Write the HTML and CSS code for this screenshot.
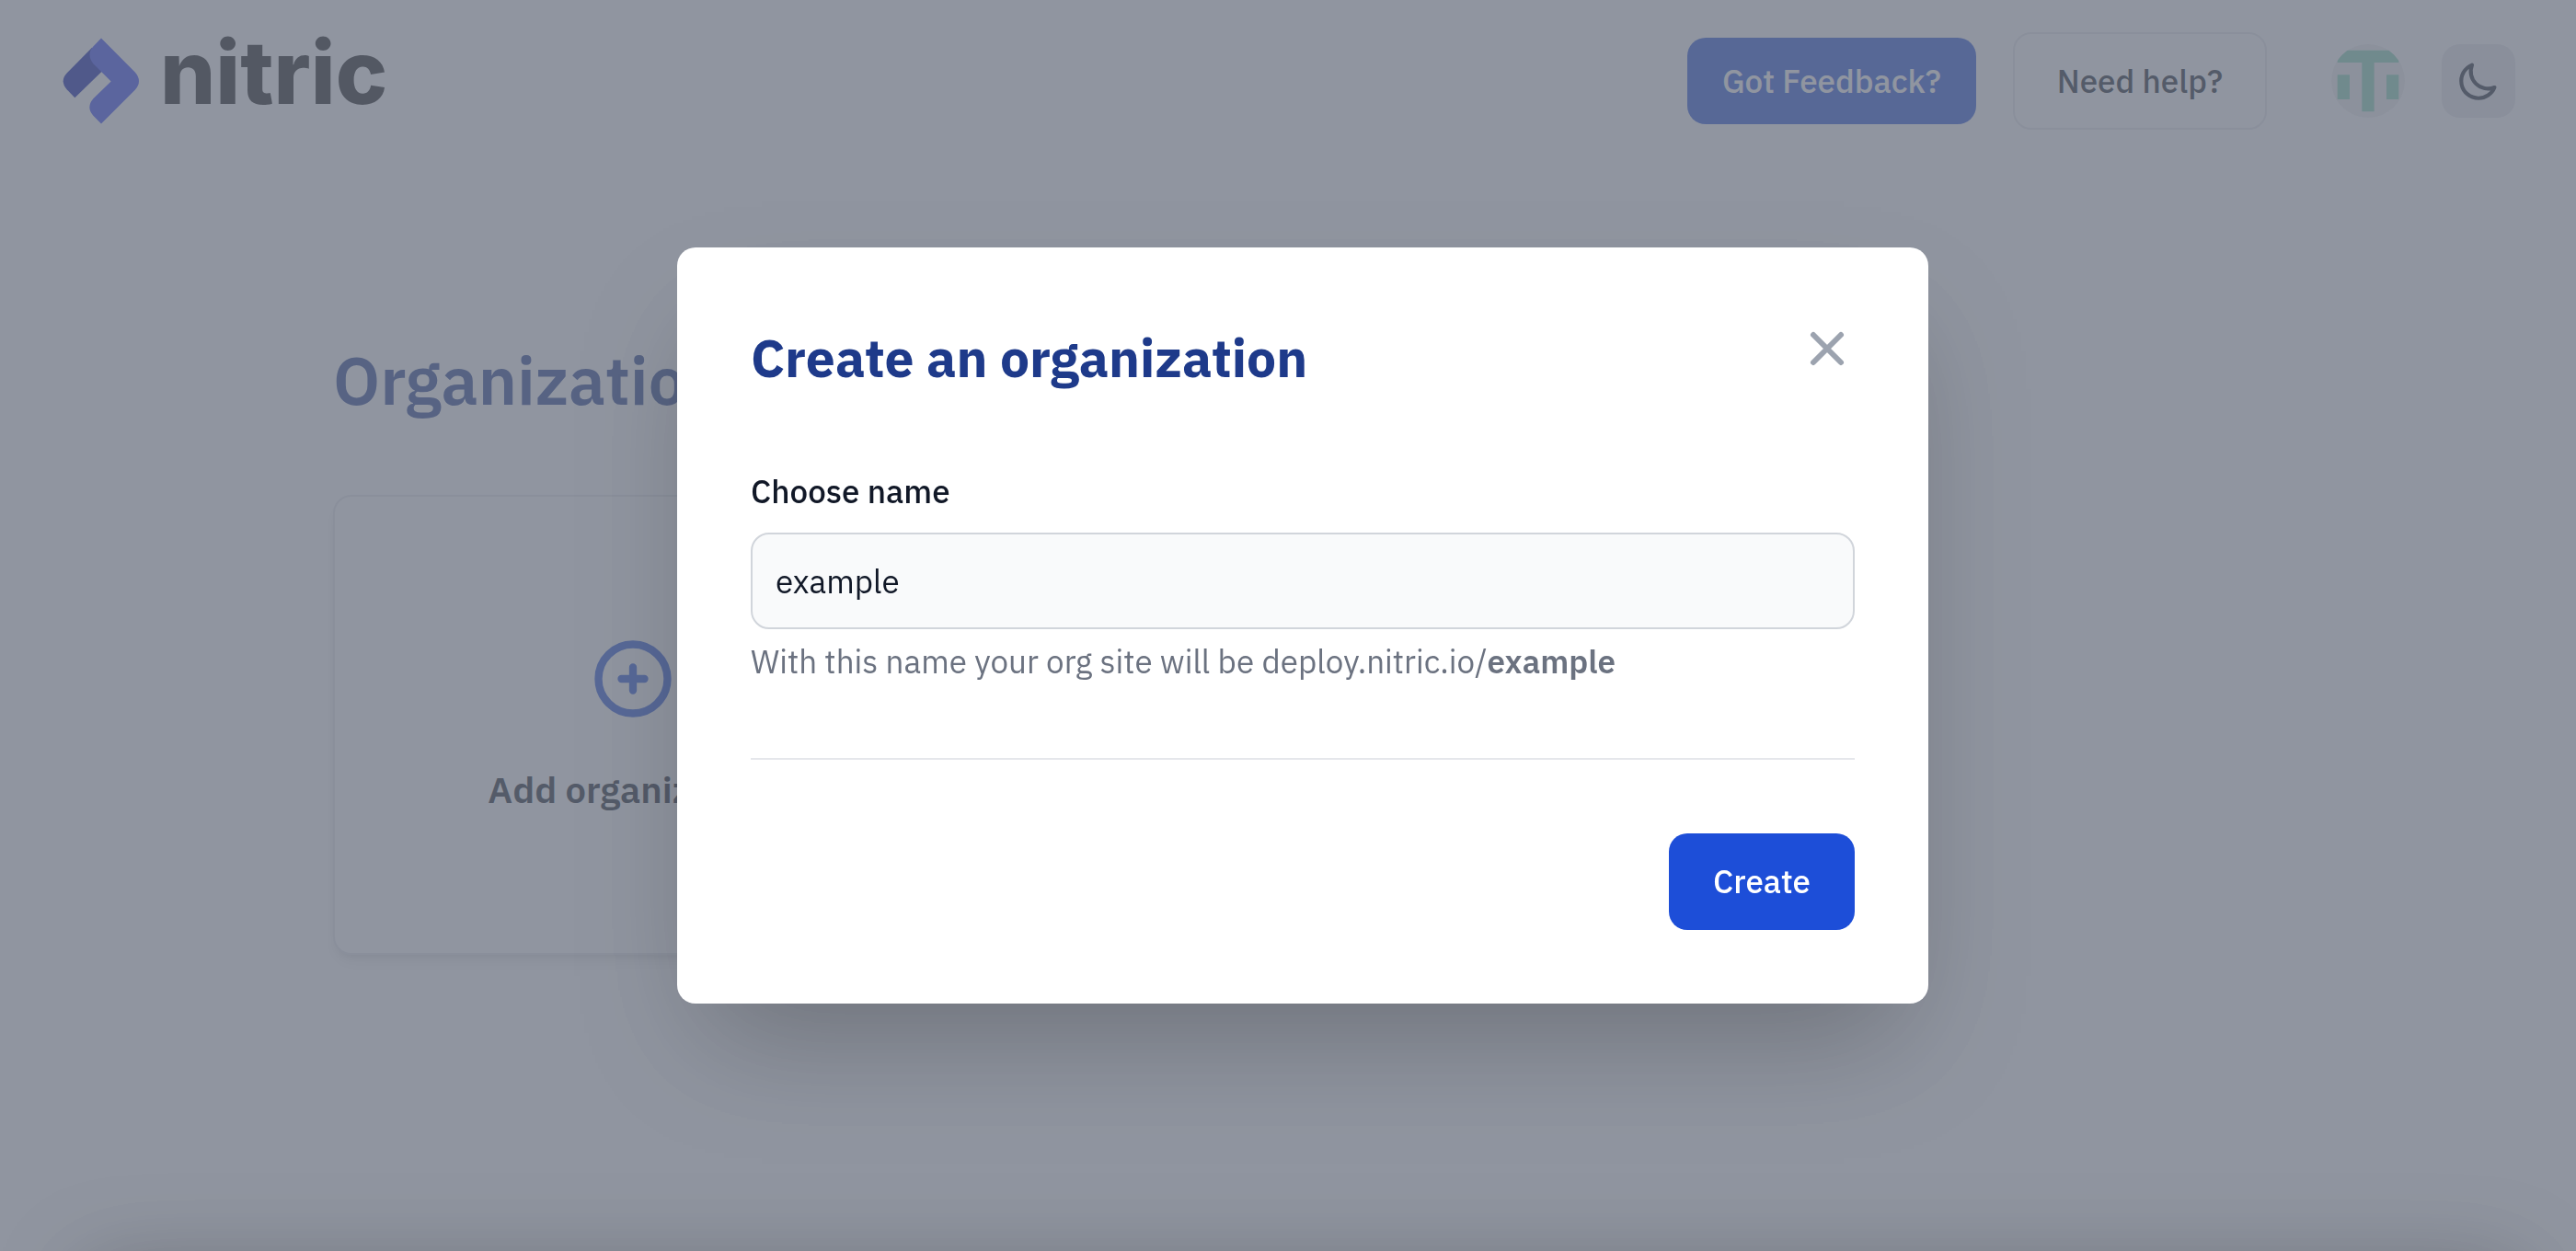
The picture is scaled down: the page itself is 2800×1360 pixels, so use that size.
FILE: index.html
```html
<!DOCTYPE html>
<html lang="en">
<head>
<meta charset="utf-8">
<meta name="viewport" content="width=device-width, initial-scale=1">
<title>Create an organization - Nitric</title>
<link rel="stylesheet" href="styles.css">
</head>
<body>
<div class="page">
  <header class="topbar">
    <a class="brand" href="#" aria-label="nitric">
      <svg class="brand-mark" viewBox="84 64 252 281" aria-hidden="true">
        <path class="mark-dark" d="M180 96 98 179Q74 205 98 232L124 259 212 174Z"/>
        <path class="mark-main" d="M210 65 321 177Q345 205 321 233L210 344 184 318Q160 290 184 262L242 206 184 148Q161 118 184 92Z"/>
      </svg>
      <span class="brand-name">nitric</span>
    </a>
    <nav class="actions">
      <button class="btn btn-feedback" type="button">Got Feedback?</button>
      <button class="btn btn-outline" type="button">Need help?</button>
      <button class="avatar" type="button" aria-label="Account">
        <svg viewBox="0 0 12 12" aria-hidden="true">
          <path d="M1 1h10v2H7v8H5V3H1zM1 5h2v4H1zM9 5h2v4H9z"/>
        </svg>
      </button>
      <button class="theme" type="button" aria-label="Dark mode">
        <svg viewBox="0 0 24 24" aria-hidden="true"><path d="M20.354 15.354A9 9 0 018.646 3.646 9.003 9.003 0 0012 21a9.003 9.003 0 008.354-5.646z"/></svg>
      </button>
    </nav>
  </header>
  <main class="content">
    <h1>Organizations</h1>
    <div class="grid">
      <button class="card" type="button">
        <svg viewBox="0 0 24 24" aria-hidden="true"><path d="M12 9v3m0 0v3m0-3h3m-3 0H9m12 0a9 9 0 11-18 0 9 9 0 0118 0z"/></svg>
        <span>Add organization</span>
      </button>
    </div>
  </main>
</div>
<div class="overlay">
  <form class="dialog" role="dialog" aria-modal="true" aria-labelledby="dialog-title">
    <div class="dialog-head">
      <h2 id="dialog-title">Create an organization</h2>
      <button class="close" type="button" aria-label="Close">
        <svg viewBox="0 0 24 24" aria-hidden="true"><path d="M6 18L18 6M6 6l12 12"/></svg>
      </button>
    </div>
    <div class="field">
      <label for="org-name">Choose name</label>
      <input id="org-name" type="text" value="example" aria-describedby="org-hint">
      <p id="org-hint">With this name your org site will be deploy.nitric.io/<strong>example</strong></p>
    </div>
    <div class="dialog-foot">
      <button class="btn btn-primary" type="submit">Create</button>
    </div>
  </form>
</div>
</body>
</html>
```
FILE: styles.css
```css
*, *::before, *::after { box-sizing: border-box; }

body {
  margin: 0;
  background: #fff;
  color: #111827;
  font-family: "IBM Plex Sans", Roboto, "Liberation Sans", sans-serif;
  font-size: 35px;
  line-height: 50px;
}

h1, h2, p { margin: 0; }

button, input { font: inherit; color: inherit; }

button {
  padding: 0;
  border: 0;
  background: none;
  cursor: pointer;
}

svg { display: block; }

.page { min-height: 100vh; }

/* Top bar */
.topbar {
  display: flex;
  align-items: center;
  justify-content: space-between;
  padding: 35px 66px 0 68px;
}

.brand {
  display: flex;
  align-items: flex-start;
  gap: 22px;
  color: #0f0f0f;
  text-decoration: none;
}

.brand-mark { width: 84px; height: 94px; }
.mark-dark { fill: #0012a8; }
.mark-main { fill: #2c40f7; }

.brand-name {
  font-family: Inter, sans-serif;
  font-size: 95px;
  font-weight: 800;
  line-height: 76px;
}

.actions {
  display: flex;
  align-items: center;
  gap: 40px;
}

.btn {
  border-radius: 20px;
  font-weight: 500;
}

.btn-feedback {
  padding: 22px 38px;
  background: #1d4ed8;
  color: #fff;
}

.btn-outline {
  padding: 26px 46px;
  border: 2px solid #e5e7eb;
  color: #111827;
}

.avatar {
  width: 80px;
  height: 80px;
  margin-left: 30px;
  border-radius: 50%;
  background: #f0f0f0;
  overflow: hidden;
}

.avatar path { fill: #80d2b4; }

.theme {
  display: grid;
  place-items: center;
  width: 80px;
  height: 80px;
  border-radius: 20px;
  background: #e5e7eb;
}

.theme svg { width: 50px; height: 50px; }

.theme path, .card path, .close path {
  fill: none;
  stroke: currentColor;
  stroke-width: 2;
  stroke-linecap: round;
  stroke-linejoin: round;
}

/* Organization list */
.content {
  width: 76%;
  margin: 0 auto;
  padding: 227px 0 80px 26px;
}

.content h1 {
  color: #1e3a8a;
  font-size: 72px;
  font-weight: 600;
  line-height: 90px;
}

.grid {
  display: grid;
  grid-template-columns: repeat(3, 1fr);
  gap: 74px;
  margin-top: 80px;
}

.card {
  display: flex;
  flex-direction: column;
  align-items: center;
  justify-content: center;
  gap: 40px;
  min-height: 500px;
  border: 2px solid #e5e7eb;
  border-radius: 20px;
  background: #fff;
  box-shadow: 0 10px 15px -3px rgb(0 0 0 / .1), 0 5px 10px -5px rgb(0 0 0 / .1);
  font-size: 40px;
  font-weight: 600;
  line-height: 60px;
}

.card svg { width: 100px; height: 100px; color: #1d4ed8; }

/* Modal */
.overlay {
  position: fixed;
  inset: 0;
  display: flex;
  align-items: center;
  justify-content: center;
  padding-left: 32px;
  background: rgb(107 114 128 / .75);
  overflow: hidden;
}

/* soft shade rising from the bottom edge */
.overlay::after {
  content: "";
  position: absolute;
  top: 100%;
  left: 92px;
  right: 60px;
  height: 200px;
  box-shadow: 0 20px 100px rgb(0 0 0 / .25);
}

.dialog {
  width: 1360px;
  max-width: 90%;
  padding: 80px;
  border-radius: 20px;
  background: #fff;
  box-shadow: 0 62px 125px -30px rgb(0 0 0 / .25);
}

.dialog-head {
  display: flex;
  align-items: flex-start;
  justify-content: space-between;
}

.dialog h2 {
  color: #1e3a8a;
  font-size: 57px;
  font-weight: 700;
  line-height: 80px;
}

.close { color: #9ca3af; }
.close svg { width: 60px; height: 60px; }
.close path { stroke-width: 2.4; }

.field {
  display: flex;
  flex-direction: column;
  margin-top: 80px;
}

.field label { font-weight: 500; }

.field input {
  height: 105px;
  margin: 20px 0 10px;
  padding: 0 25px;
  border: 2px solid #d1d5db;
  border-radius: 20px;
  background: #f9fafb;
  outline: none;
}

.field p { color: #6b7280; }
.field strong { font-weight: 600; }

.dialog-foot {
  display: flex;
  justify-content: flex-end;
  margin-top: 80px;
  padding-top: 80px;
  border-top: 2px solid #e5e7eb;
}

.btn-primary {
  padding: 27px 48px 28px;
  background: #1d4ed8;
  color: #fff;
}
```
